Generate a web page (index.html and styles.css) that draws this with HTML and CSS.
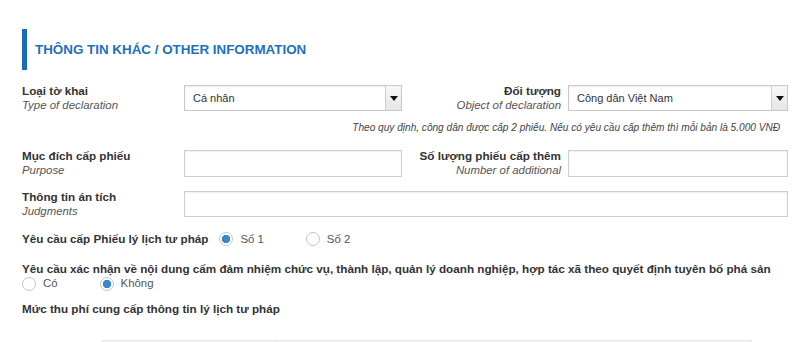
FILE: index.html
```html
<!DOCTYPE html>
<html>
<head>
  <title>Thông tin khác</title>
  <link rel="stylesheet" href="styles.css">
</head>
<body>
  <div class="section">
    <h2 class="heading">THÔNG TIN KHÁC / OTHER INFORMATION</h2>

    <div class="grid">
      <div class="label">
        <b>Loại tờ khai</b>
        <i>Type of declaration</i>
      </div>
      <div class="select-wrap">
        <select><option>Cá nhân</option></select>
      </div>
      <div class="label right">
        <b>Đối tượng</b>
        <i>Object of declaration</i>
      </div>
      <div class="select-wrap">
        <select><option>Công dân Việt Nam</option></select>
      </div>
    </div>

    <p class="note">Theo quy định, công dân được cấp 2 phiếu. Nếu có yêu cầu cấp thêm thì mỗi bản là 5.000 VNĐ</p>

    <div class="grid">
      <div class="label">
        <b>Mục đích cấp phiếu</b>
        <i>Purpose</i>
      </div>
      <input type="text" class="field">
      <div class="label right">
        <b>Số lượng phiếu cấp thêm</b>
        <i>Number of additional</i>
      </div>
      <input type="text" class="field">
    </div>

    <div class="grid row-gap">
      <div class="label">
        <b>Thông tin án tích</b>
        <i>Judgments</i>
      </div>
      <input type="text" class="field wide">
    </div>

    <div class="radio-row">
      <b>Yêu cầu cấp Phiếu lý lịch tư pháp</b>
      <label class="option first"><input type="radio" name="phieu" checked> Số 1</label>
      <label class="option"><input type="radio" name="phieu"> Số 2</label>
    </div>

    <div class="question">
      <b>Yêu cầu xác nhận về nội dung cấm đảm nhiệm chức vụ, thành lập, quản lý doanh nghiệp, hợp tác xã theo quyết định tuyên bố phá sản</b>
      <div class="options">
        <label class="option"><input type="radio" name="xacnhan"> Có</label>
        <label class="option"><input type="radio" name="xacnhan" checked> Không</label>
      </div>
    </div>

    <div class="fee-title"><b>Mức thu phí cung cấp thông tin lý lịch tư pháp</b></div>

    <div class="fee-table">
      <div class="cell first"></div>
      <div class="cell"></div>
    </div>
  </div>
</body>
</html>
```

FILE: styles.css
```css
body {
  margin: 0;
  font-family: "Liberation Sans", Arial, sans-serif;
  font-size: 11.7px;
  color: #333;
  background: #fff;
  overflow: hidden;
}

.section {
  padding: 29px 12px 0 22px;
}

.heading {
  margin: 0;
  height: 41px;
  display: flex;
  align-items: center;
  border-left: 5px solid #1b6bb8;
  padding-left: 8px;
  font-size: 13.4px;
  font-weight: bold;
  color: #1e70bd;
}

.grid {
  display: grid;
  grid-template-columns: 162px 218px 1fr 220px;
  align-items: center;
  margin-top: 13px;
}

.grid.row-gap {
  margin-top: 11px;
}

.label {
  display: flex;
  flex-direction: column;
  line-height: 15px;
}

.label b {
  color: #333;
}

.label i {
  font-size: 11.4px;
  color: #555;
}

.label.right {
  text-align: right;
  padding-right: 7px;
}

.select-wrap {
  position: relative;
  height: 26px;
}

.select-wrap select {
  appearance: none;
  width: 100%;
  height: 26px;
  margin: 0;
  border: 1px solid #c9c9c9;
  border-radius: 0;
  background: #fff;
  box-shadow: inset 0 1px 2px rgba(0, 0, 0, 0.08);
  padding: 0 20px 0 8px;
  font-family: inherit;
  font-size: 11px;
  color: #333;
}

.select-wrap::after {
  content: "";
  position: absolute;
  top: 1px;
  right: 1px;
  bottom: 1px;
  width: 15px;
  border-left: 1px solid #cfcfcf;
  background: linear-gradient(#f7f7f7, #e6e6e6);
}

.select-wrap::before {
  content: "";
  position: absolute;
  right: 4px;
  top: 11px;
  border-left: 4px solid transparent;
  border-right: 4px solid transparent;
  border-top: 5px solid #111;
  z-index: 1;
}

.field {
  box-sizing: border-box;
  height: 27px;
  width: 100%;
  margin: 0;
  border: 1px solid #cfcfcf;
  box-shadow: inset 0 1px 2px rgba(0, 0, 0, 0.07);
  font-family: inherit;
  font-size: 11px;
}

.field.wide {
  grid-column: 2 / 5;
  height: 26px;
}

.note {
  margin: 8px 8px 0 0;
  text-align: right;
  font-style: italic;
  font-size: 10.1px;
  line-height: 14px;
  color: #444;
}

.radio-row {
  display: flex;
  align-items: center;
  margin-top: 12px;
  line-height: 16px;
}

.option {
  display: inline-flex;
  align-items: center;
  gap: 7px;
  margin-right: 42px;
  font-size: 11.4px;
  color: #555;
}

.radio-row .option.first {
  margin-left: 11px;
}

.option input {
  appearance: none;
  margin: 0;
  width: 14px;
  height: 14px;
  border: 1px solid #c4c4c4;
  border-radius: 50%;
  background: #fff;
  box-sizing: border-box;
}

.option input:checked {
  background: radial-gradient(circle, #3d87cf 0 4px, #fff 4.5px);
}

.question {
  margin-top: 14px;
  line-height: 15px;
}

.options {
  display: flex;
  align-items: center;
  height: 15px;
}

.fee-title {
  margin-top: 10px;
  line-height: 16px;
}

.fee-table {
  display: flex;
  margin: 23px 0 0 80px;
  width: 648px;
  height: 20px;
  border: 1px solid #e6e6e6;
  background: #f5f5f5;
}

.cell.first {
  width: 172px;
  border-right: 1px solid #e0e0e0;
}
```
